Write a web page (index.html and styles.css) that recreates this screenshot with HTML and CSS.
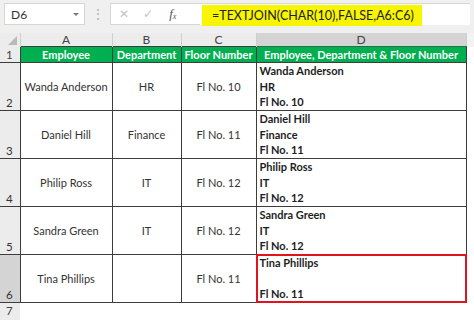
FILE: index.html
```html
<!DOCTYPE html>
<html lang="en">
<head>
  <meta charset="UTF-8" />
  <title>TEXTJOIN</title>
  <link rel="stylesheet" href="styles.css">
</head>
<body>
  <div class="formula-bar">
    <div class="name-box">
      <span>D6</span>
      <span class="drop"></span>
    </div>
    <div class="grip">&#8942;</div>
    <div class="fx-box">
      <span class="icon x">&#10005;</span>
      <span class="icon check">&#10003;</span>
      <span class="fx">f<sub>x</sub></span>
    </div>
    <div class="formula">
      <span class="mark">=TEXTJOIN(CHAR(10),FALSE,A6:C6)</span>
    </div>
  </div>

  <table class="sheet">
    <colgroup>
      <col class="c-num">
      <col class="c-a">
      <col class="c-b">
      <col class="c-c">
      <col class="c-d">
      <col class="c-e">
    </colgroup>
    <tr class="letters">
      <th class="corner"><span class="tri"></span></th>
      <th>A</th>
      <th>B</th>
      <th>C</th>
      <th class="sel">D</th>
      <th class="blank"></th>
    </tr>
    <tr class="head">
      <td class="num">1</td>
      <td>Employee</td>
      <td>Department</td>
      <td>Floor Number</td>
      <td>Employee, Department &amp; Floor Number</td>
      <td class="out"></td>
    </tr>
    <tr class="row">
      <td class="num">2</td>
      <td>Wanda Anderson</td>
      <td>HR</td>
      <td>Fl No. 10</td>
      <td class="join">Wanda Anderson<br>HR<br>Fl No. 10</td>
      <td class="out"></td>
    </tr>
    <tr class="row">
      <td class="num">3</td>
      <td>Daniel Hill</td>
      <td>Finance</td>
      <td>Fl No. 11</td>
      <td class="join">Daniel Hill<br>Finance<br>Fl No. 11</td>
      <td class="out"></td>
    </tr>
    <tr class="row">
      <td class="num">4</td>
      <td>Philip Ross</td>
      <td>IT</td>
      <td>Fl No. 12</td>
      <td class="join">Philip Ross<br>IT<br>Fl No. 12</td>
      <td class="out"></td>
    </tr>
    <tr class="row">
      <td class="num">5</td>
      <td>Sandra Green</td>
      <td>IT</td>
      <td>Fl No. 12</td>
      <td class="join">Sandra Green<br>IT<br>Fl No. 12</td>
      <td class="out"></td>
    </tr>
    <tr class="row">
      <td class="num active">6</td>
      <td>Tina Phillips</td>
      <td></td>
      <td>Fl No. 11</td>
      <td class="join picked"><div class="ring"></div>Tina Phillips<br>&nbsp;<br>Fl No. 11</td>
      <td class="out"></td>
    </tr>
    <tr class="last">
      <td class="num">7</td>
      <td></td><td></td><td></td><td></td><td></td>
    </tr>
  </table>
</body>
</html>
```

FILE: styles.css
```css
body {
  margin: 0;
  width: 474px;
  height: 320px;
  overflow: hidden;
  background: #fff;
  font-family: 'Lato', 'Open Sans', sans-serif;
  color: #333;
}

/* formula bar */
.formula-bar {
  display: flex;
  align-items: flex-start;
  height: 33px;
  padding: 3px 0 0 4px;
  box-sizing: border-box;
  background: #f0f0f0;
}

.name-box {
  width: 81px;
  height: 22px;
  box-sizing: border-box;
  background: #fff;
  border: 1px solid #d6d6d6;
  display: flex;
  align-items: center;
  justify-content: space-between;
  padding: 0 5px 0 6px;
  font-size: 12px;
  color: #333;
}

.drop {
  width: 0;
  height: 0;
  border-left: 3px solid transparent;
  border-right: 3px solid transparent;
  border-top: 3px solid #777;
}

.grip {
  width: 25px;
  text-align: center;
  color: #b5b5b5;
  font-size: 14px;
  line-height: 22px;
}

.fx-box {
  width: 90px;
  height: 22px;
  box-sizing: border-box;
  background: #fff;
  border: 1px solid #d6d6d6;
  border-right: none;
  display: flex;
  align-items: center;
  padding-left: 8px;
  gap: 14px;
}

.icon {
  font-size: 12px;
  color: #c4c4c4;
  font-family: 'DejaVu Sans', sans-serif;
}

.fx {
  font-family: 'Liberation Serif', serif;
  font-style: italic;
  font-size: 13px;
  color: #555;
  margin-left: 2px;
}

.fx sub {
  font-size: 8px;
  vertical-align: -1px;
}

.formula {
  flex: 1;
  height: 22px;
  margin-right: 4px;
  background: #fff;
  border-top: 1px solid #d6d6d6;
  box-sizing: border-box;
  padding-left: 2px;
}

.mark {
  display: inline-block;
  height: 21px;
  line-height: 21px;
  padding: 0 8px 0 10px;
  background: #f7f500;
  font-size: 12.5px;
  color: #222;
}

/* sheet grid */
.sheet {
  border-collapse: collapse;
  table-layout: fixed;
  width: 474px;
  font-size: 11px;
}

.c-num { width: 20px; }
.c-a { width: 92px; }
.c-b { width: 69px; }
.c-c { width: 75px; }
.c-d { width: 210px; }
.c-e { width: 8px; }

.letters th {
  height: 13px;
  padding: 0;
  background: #ececec;
  border-right: 1px solid #cfcfcf;
  font-weight: normal;
  font-size: 12px;
  line-height: 13px;
  color: #444;
}

.letters th.sel {
  background: #d4d4d4;
  border-bottom: 1px solid #217346;
}

.letters th.blank {
  border-right: none;
  background: #f3f3f3;
}

.corner {
  position: relative;
}

.tri {
  position: absolute;
  right: 3px;
  bottom: 2px;
  width: 0;
  height: 0;
  border-left: 9px solid transparent;
  border-bottom: 9px solid #b9b9b9;
}

td {
  padding: 0;
  text-align: center;
  white-space: nowrap;
  overflow: hidden;
}

td.num {
  background: #ececec;
  border-bottom: 1px solid #d2d2d2;
  text-align: left;
  vertical-align: bottom;
  padding-left: 6px;
  font-size: 11.5px;
  line-height: 15px;
  color: #444;
}

td.num.active {
  background: #d4d4d4;
  border-right: 2px solid #217346;
}

.head td {
  height: 15px;
  background: #00b050;
  color: #fff;
  font-weight: bold;
  border: 1px solid #3d3d3d;
  line-height: 14px;
}

.head td.num,
.row td.num,
.last td.num {
  border-left: none;
  border-top: none;
  border-right: none;
}

.head td.num {
  background: #ececec;
  color: #444;
  font-weight: normal;
}

.head td.out,
.row td.out {
  background: #fff;
  border: none;
  border-left: 1px solid #3d3d3d;
}

.row td {
  height: 47px;
  border: 1px solid #3d3d3d;
  color: #333;
}

.row td.join {
  text-align: left;
  vertical-align: top;
  padding-left: 3px;
  font-weight: bold;
  color: #1e1e1e;
  line-height: 15.6px;
}

.row td.picked {
  position: relative;
  overflow: visible;
}

.ring {
  position: absolute;
  z-index: 2;
  left: -1px;
  top: -1px;
  right: -1px;
  bottom: -1px;
  border: 2px solid #e0141e;
  pointer-events: none;
}

.last td {
  height: 16px;
}

.last td.num {
  vertical-align: top;
  line-height: 14px;
  padding-top: 1px;
}
```
